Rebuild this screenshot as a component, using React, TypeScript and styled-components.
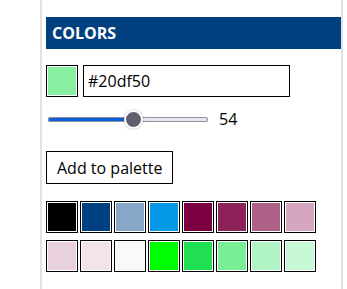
import React, { useState } from "react";
import styled, { createGlobalStyle } from "styled-components";

const GlobalStyle = createGlobalStyle`
  body {
    margin: 0;
    background: #fff;
    font-family: "Open Sans", "Noto Sans", sans-serif;
    color: #000;
  }
`;

const Panel = styled.div`
  margin-left: 40px;
  width: 303px;
  min-height: 289px;
  box-sizing: border-box;
  border-left: 2px solid #e2e2e2;
  border-right: 2px solid #e2e2e2;
  padding: 17px 0 0 4px;
`;

const Header = styled.h2`
  margin: 0;
  height: 32px;
  background: #00407f;
  color: #fff;
  font-size: 16px;
  font-weight: 700;
  line-height: 32px;
  padding-left: 6px;
`;

const PickerRow = styled.div`
  display: flex;
  align-items: center;
  gap: 5px;
  margin-top: 16px;
`;

const Swatch = styled.button<{ $color: string }>`
  width: 32px;
  height: 32px;
  padding: 0;
  box-sizing: border-box;
  border: 1px solid #000;
  background: ${(p) => p.$color};
  box-shadow: inset 0 0 0 1px #fff;
  cursor: pointer;
`;

const HexInput = styled.input`
  width: 207px;
  height: 32px;
  box-sizing: border-box;
  border: 1px solid #000;
  padding: 0 4px;
  font-family: "Open Sans", "Noto Sans", sans-serif;
  font-size: 16px;
  color: #000;
  outline: none;
`;

const SliderRow = styled.div`
  display: flex;
  align-items: center;
  gap: 11px;
  margin-top: 11px;
  padding-left: 2px;
`;

const Range = styled.input<{ $pct: number }>`
  -webkit-appearance: none;
  appearance: none;
  width: 160px;
  height: 21px;
  margin: 0;
  background: transparent;

  &::-webkit-slider-runnable-track {
    height: 5px;
    border-radius: 3px;
    background: linear-gradient(
      to right,
      #0b5fdc ${(p) => p.$pct}%,
      #e9e9ed ${(p) => p.$pct}%
    );
    box-shadow: inset 0 0 0 1px #8f8f9d;
  }

  &::-webkit-slider-thumb {
    -webkit-appearance: none;
    width: 19px;
    height: 19px;
    margin-top: -7px;
    border-radius: 50%;
    box-sizing: border-box;
    background: #5f5f6e;
    border: 2px solid #fff;
    box-shadow: 0 0 2px rgba(0, 0, 0, 0.35);
  }
`;

const RangeValue = styled.span`
  font-size: 16px;
  line-height: 22px;
`;

const AddButton = styled.button`
  margin-top: 21px;
  height: 33px;
  padding: 0 10px;
  border: 1px solid #000;
  background: #fff;
  font-family: "Open Sans", "Noto Sans", sans-serif;
  font-size: 16px;
  color: #000;
  cursor: pointer;
`;

const Palette = styled.div`
  display: grid;
  grid-template-columns: repeat(8, 32px);
  column-gap: 2px;
  row-gap: 7px;
  margin-top: 17px;
`;

const palette = [
  "#000000",
  "#00407f",
  "#88a6c6",
  "#0599e5",
  "#7a0040",
  "#8e2258",
  "#af6086",
  "#d4a6c0",
  "#e8d0de",
  "#f2e4ea",
  "#fbf8fa",
  "#00ff00",
  "#20df50",
  "#78ee96",
  "#b0f3c4",
  "#c8f7d6",
];

export default function App() {
  const [hex, setHex] = useState("#20df50");
  const [light, setLight] = useState(54);
  const pct = 9.5 / 1.6 + (light / 100) * (141 / 1.6);

  return (
    <Panel>
      <GlobalStyle />
      <Header>COLORS</Header>
      <PickerRow>
        <Swatch $color="#89efa0" aria-label="Current color" />
        <HexInput value={hex} onChange={(e) => setHex(e.target.value)} />
      </PickerRow>
      <SliderRow>
        <Range
          type="range"
          min={0}
          max={100}
          value={light}
          $pct={pct}
          onChange={(e) => setLight(Number(e.target.value))}
        />
        <RangeValue>{light}</RangeValue>
      </SliderRow>
      <AddButton>Add to palette</AddButton>
      <Palette>
        {palette.map((c, i) => (
          <Swatch key={i} $color={c} onClick={() => setHex(c)} />
        ))}
      </Palette>
    </Panel>
  );
}
